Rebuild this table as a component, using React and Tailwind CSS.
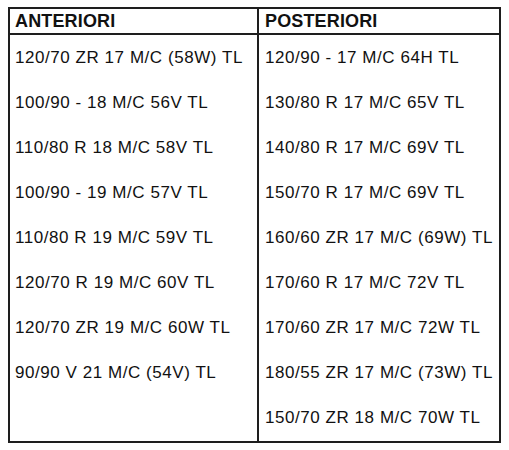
import React from "react";

const front = [
  "120/70 ZR 17 M/C (58W) TL",
  "100/90 - 18 M/C 56V TL",
  "110/80 R 18 M/C 58V TL",
  "100/90 - 19 M/C 57V TL",
  "110/80 R 19 M/C 59V TL",
  "120/70 R 19 M/C 60V TL",
  "120/70 ZR 19 M/C 60W TL",
  "90/90 V 21 M/C (54V) TL",
  "",
];

const rear = [
  "120/90 - 17 M/C 64H TL",
  "130/80 R 17 M/C 65V TL",
  "140/80 R 17 M/C 69V TL",
  "150/70 R 17 M/C 69V TL",
  "160/60 ZR 17 M/C (69W) TL",
  "170/60 R 17 M/C 72V TL",
  "170/60 ZR 17 M/C 72W TL",
  "180/55 ZR 17 M/C (73W) TL",
  "150/70 ZR 18 M/C 70W TL",
];

function Column({ title, items, left }) {
  return (
    <div className={"flex flex-col pb-[1px] " + (left ? "border-r-2 border-[#1e1e1e] pl-[5px]" : "pl-[6px]")}>
      <div className="h-[26px] flex items-center border-b-2 border-[#1e1e1e] -ml-[6px] pl-[6px] font-bold text-[18px] tracking-[0.15px] text-[#111]">
        {title}
      </div>
      {items.map((t, i) => (
        <div key={i} className="h-[45px] flex items-center text-[17px] tracking-[0.55px] text-[#111] whitespace-nowrap">
          {t}
        </div>
      ))}
    </div>
  );
}

export default function App() {
  return (
    <div className="w-[509px] h-[450px] bg-white pt-[7px] pl-[8px]" style={{ fontFamily: '"Liberation Sans", Arial, sans-serif' }}>
      <div className="w-[493px] border-2 border-[#1e1e1e] grid grid-cols-[249px_1fr]">
        <Column title="ANTERIORI" items={front} left />
        <Column title="POSTERIORI" items={rear} />
      </div>
    </div>
  );
}
